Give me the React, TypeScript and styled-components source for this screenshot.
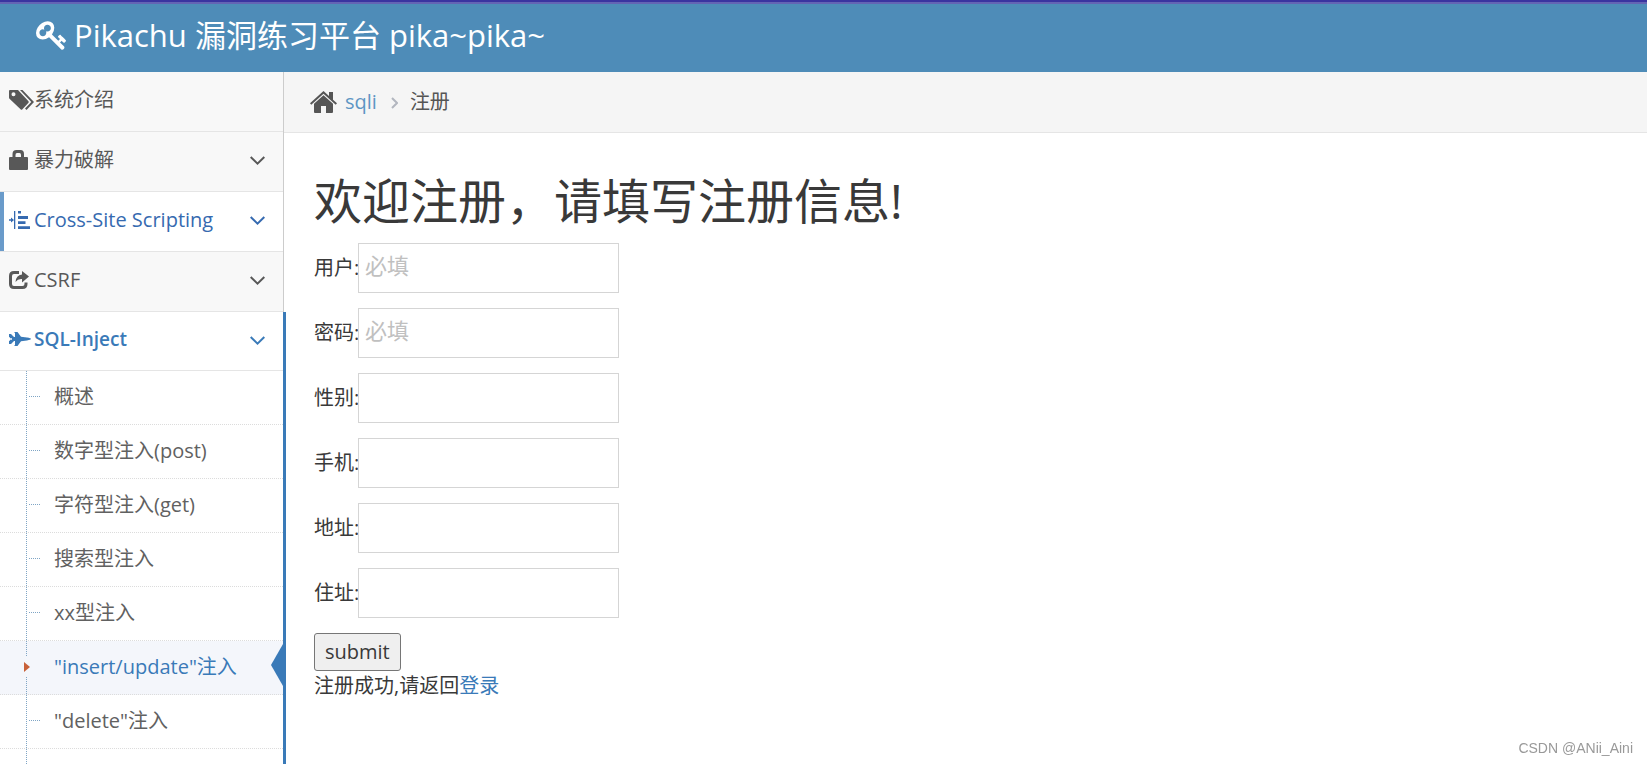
import React from "react";
import styled, { createGlobalStyle, css } from "styled-components";

const GlobalStyle = createGlobalStyle`
  *, *::before, *::after { box-sizing: border-box; }
  body {
    margin: 0;
    background: #fff;
    color: #393939;
    font-family: "Open Sans", "Noto Sans CJK SC", sans-serif;
    font-size: 20px;
    line-height: 30px;
  }
`;

const Page = styled.div`
  display: flex;
  flex-direction: column;
  min-height: 100vh;
`;

const Header = styled.header`
  display: flex;
  align-items: center;
  height: 72px;
  padding: 0 36px 4px;
  background: #4e8cb8;
  border-top: 2px solid #3a34a0;
  box-shadow: inset 0 2px 0 #6464b4;
`;

const Brand = styled.a`
  display: flex;
  align-items: center;
  gap: 6px;
  color: #fff;
  font-size: 31px;
  line-height: 40px;
  text-decoration: none;
`;

const Columns = styled.div`
  display: flex;
  flex: 1;
`;

const Sidebar = styled.nav`
  display: flex;
  flex: none;
  width: 286px;
`;

const Menu = styled.ul`
  display: flex;
  flex-direction: column;
  flex: 1;
  margin: 0;
  padding: 0;
  list-style: none;
`;

const MenuItem = styled.li<{ $open?: boolean }>`
  display: flex;
  flex-direction: column;
  margin-right: 2px;
  border-right: 1px solid #ccc;
  ${(p) =>
    p.$open &&
    css`
      flex: 1;
      margin-right: 0;
      border-right: 3px solid #3a7ab8;
    `}
`;

const MenuLink = styled.a<{ $state?: "hover" | "open" }>`
  display: flex;
  align-items: center;
  height: 60px;
  padding: 0 18px 4px 9px;
  border-bottom: 1px solid #e5e5e5;
  background: #f8f8f8;
  color: #585858;
  text-decoration: none;
  ${(p) =>
    p.$state === "hover" &&
    css`
      background: #fff;
      color: #366ab0;
      box-shadow: inset 4px 0 0 #6a9bca;
    `}
  ${(p) =>
    p.$state === "open" &&
    css`
      height: 58px;
      border-bottom: 0;
      background: #fff;
      color: #3a7ab8;
      font-size: 19px;
      font-weight: 600;
    `}
`;

const MenuIcon = styled.span`
  display: flex;
  flex: none;
  width: 25px;
`;

const MenuText = styled.span`
  flex: 1;
  white-space: nowrap;
`;

const Submenu = styled.ul`
  position: relative;
  flex: 1;
  margin: 0;
  padding: 0;
  border-top: 1px solid #e5e5e5;
  list-style: none;
  &::before {
    content: "";
    position: absolute;
    z-index: 1;
    top: 0;
    bottom: 0;
    left: 26px;
    border-left: 1px dotted #7fa5c5;
  }
`;

const SubItem = styled.li`
  position: relative;
`;

const SubLink = styled.a<{ $current?: boolean }>`
  display: flex;
  align-items: center;
  height: 54px;
  padding: 0 0 2px 54px;
  border-bottom: 1px dotted #dcdcdc;
  background: ${(p) => (p.$current ? "#f4f6fb" : "#fff")};
  color: ${(p) => (p.$current ? "#3a7ab8" : "#616161")};
  text-decoration: none;
  white-space: nowrap;
`;

const Branch = styled.span`
  position: absolute;
  top: 25px;
  left: 29px;
  width: 11px;
  border-top: 1px dotted #7fa5c5;
`;

const Caret = styled.span`
  position: absolute;
  z-index: 2;
  top: 16px;
  left: 24px;
  display: flex;
  align-items: center;
  height: 20px;
  background: #f4f6fb;
`;

const Pointer = styled.svg`
  position: absolute;
  top: 3px;
  right: 0;
`;

const Main = styled.main`
  flex: 1;
  min-width: 0;
`;

const Breadcrumb = styled.nav`
  display: flex;
  align-items: center;
  height: 61px;
  margin-left: -2px;
  padding: 0 26px;
  border-bottom: 1px solid #e5e5e5;
  background: #f5f5f5;
  color: #555;
`;

const Crumb = styled.a`
  margin-left: 8px;
  color: #5e96c4;
  text-decoration: none;
`;

const Separator = styled.svg`
  margin: 2px 12px 0 14px;
`;

const Content = styled.div`
  padding: 36px 28px;
`;

const Title = styled.h1`
  margin: 0 0 10px;
  font-size: 48px;
  font-weight: 400;
  line-height: 64px;
`;

const Form = styled.form`
  display: flex;
  flex-direction: column;
  align-items: flex-start;
`;

const Field = styled.div`
  display: flex;
  align-items: center;
  margin-bottom: 15px;
`;

const FieldLabel = styled.label`
  width: 44px;
  white-space: nowrap;
`;

const TextInput = styled.input`
  width: 261px;
  height: 50px;
  padding: 2px 6px 8px;
  border: 1px solid #d5d5d5;
  border-radius: 0;
  background: #fff;
  color: #858585;
  font-family: inherit;
  font-size: 22px;
  &::placeholder {
    color: #c0c0c0;
    opacity: 1;
  }
`;

const SubmitButton = styled.button`
  height: 38px;
  padding: 0 10px;
  border: 1px solid #767676;
  border-radius: 3px;
  background: #efefef;
  color: #393939;
  font-family: inherit;
  font-size: 20px;
  line-height: 30px;
`;

const Message = styled.p`
  margin: 0;
  a {
    color: #3a7ab8;
    text-decoration: none;
  }
`;

const Watermark = styled.span`
  position: fixed;
  right: 14px;
  bottom: 8px;
  color: #999;
  font-family: "Liberation Sans", sans-serif;
  font-size: 14px;
  line-height: 16px;
`;

const Chevron = styled.svg`
  margin-top: 2px;
`;

const KeyIcon = () => (
  <svg width="32" height="32" viewBox="0 0 1792 1792" fill="currentColor" aria-hidden="true">
    <path d="M832 512q0-80-56-136t-136-56-136 56-56 136q0 42 19 83-41-19-83-19-80 0-136 56t-56 136 56 136 136 56 136-56 56-136q0-42-19-83 41 19 83 19 80 0 136-56t56-136zm851 704q0 17-49 66t-66 49q-9 0-28.500-16t-36.500-33-38.500-40-24.500-26l-96 96 220 220q28 28 28 68 0 42-39 81t-81 39q-40 0-68-28l-671-671q-176 131-365 131-163 0-265.500-102.500t-102.500-265.500q0-160 95-313t248-248 313-95q163 0 265.500 102.500t102.500 265.500q0 189-131 365l355 355 96-96q-3-3-26-24.500t-40-38.500-33-36.500-16-28.500q0-17 49-66t66-49q13 0 23 10 6 6 46 44.500t82 79.500 86.500 86 73 78 28.500 41z" />
  </svg>
);

const TagsIcon = () => (
  <svg width="25" height="20" viewBox="0 0 25 20" fill="currentColor" aria-hidden="true">
    <path fillRule="evenodd" d="M1 0H9L19.500 11.200Q20 12 19.500 12.700L13.200 19.500Q12.500 20 11.800 19.500L.5 8.700Q0 8.200 0 7.500V1Q0 0 1 0ZM4.500 2.300a2 2 0 1 0 0 4 2 2 0 1 0 0-4Z" />
    <path d="M11 0H13.500L25 12L17.500 20L16 18.600L22.300 12Z" />
  </svg>
);

const LockIcon = () => (
  <svg width="19" height="20" viewBox="0 0 19 20" fill="currentColor" aria-hidden="true">
    <path fillRule="evenodd" d="M1 7H3.500V4Q3.500 0 7.500 0H11.500Q15 0 15 4V7H18Q19 7 19 8V19Q19 20 18 20H1Q0 20 0 19V8Q0 7 1 7ZM6.500 7H12V5Q12 3 10.500 3H8Q6.500 3 6.500 5Z" />
  </svg>
);

const IndentIcon = () => (
  <svg width="22" height="18" viewBox="0 0 22 18" fill="currentColor" aria-hidden="true">
    <path d="M5 0H6.300V18H5ZM0 8.300H2V6.500L5 9L2 11.500V9.700H0ZM9 0H12V2.500H9ZM9 5H19V8H9ZM9 10.200H16.500V13H9ZM9 15.200H21V18H9Z" />
  </svg>
);

const ShareIcon = () => (
  <svg width="20" height="18" viewBox="0 0 20 18" aria-hidden="true">
    <path d="M10 1.500H5Q1.500 1.500 1.500 5V13Q1.500 16.500 5 16.500H13.500Q17 16.500 17 13V11.500" fill="none" stroke="currentColor" strokeWidth="3" />
    <path d="M13 0L20 5.500L13 11.500V8Q9 7.500 6.500 11Q7 4 13 3.500Z" fill="currentColor" />
  </svg>
);

const JetIcon = () => (
  <svg width="22" height="14" viewBox="0 0 22 14" fill="currentColor" aria-hidden="true">
    <path d="M0 2H2L5 5H6V1H5.500V0H8.500L12 4.800L18 5.600Q22 6.300 22 7Q22 7.700 18 8.400L12 9.200L8.500 14H5.500V13H6V9H5L2 12H0V8.700H1V7.700H3V6.300H1V5.300H0Z" />
  </svg>
);

const HomeIcon = () => (
  <svg width="27" height="22" viewBox="0 0 27 22" fill="currentColor" aria-hidden="true">
    <path d="M13.500 0L19 5V1H23V8.700L27 12.300L25.700 13.700L13.500 2.700L1.300 13.700L0 12.300Z" />
    <path d="M13.500 4.300L23 12.800V21Q23 22 22 22H16V15H11V22H5Q4 22 4 21V12.800Z" />
  </svg>
);

const ChevronDown = () => (
  <Chevron width="15" height="9" viewBox="0 0 15 9" fill="none" stroke="currentColor" strokeWidth="2" aria-hidden="true">
    <path d="M.7 1L7.500 7.600L14.300 1" />
  </Chevron>
);

type Entry = {
  text: string;
  icon: React.ReactNode;
  state?: "hover" | "open";
  leaf?: boolean;
  children?: string[];
};

const entries: Entry[] = [
  { text: "系统介绍", icon: <TagsIcon />, leaf: true },
  { text: "暴力破解", icon: <LockIcon /> },
  { text: "Cross-Site Scripting", icon: <IndentIcon />, state: "hover" },
  { text: "CSRF", icon: <ShareIcon /> },
  {
    text: "SQL-Inject",
    icon: <JetIcon />,
    state: "open",
    children: [
      "概述",
      "数字型注入(post)",
      "字符型注入(get)",
      "搜索型注入",
      "xx型注入",
      '"insert/update"注入',
      '"delete"注入',
    ],
  },
];

const currentPage = '"insert/update"注入';

const fields = [
  { id: "username", label: "用户:", placeholder: "必填" },
  { id: "password", label: "密码:", placeholder: "必填", type: "password" },
  { id: "sex", label: "性别:" },
  { id: "phone", label: "手机:" },
  { id: "email", label: "地址:" },
  { id: "address", label: "住址:" },
];

export default function App() {
  return (
    <>
      <GlobalStyle />
      <Page>
        <Header>
          <Brand href="#">
            <KeyIcon />
            Pikachu 漏洞练习平台 pika~pika~
          </Brand>
        </Header>
        <Columns>
          <Sidebar>
            <Menu>
              {entries.map((e) => (
                <MenuItem key={e.text} $open={e.state === "open"}>
                  <MenuLink href="#" $state={e.state}>
                    <MenuIcon>{e.icon}</MenuIcon>
                    <MenuText>{e.text}</MenuText>
                    {!e.leaf && <ChevronDown />}
                  </MenuLink>
                  {e.children && (
                    <Submenu>
                      {e.children.map((c) => {
                        const current = c === currentPage;
                        return (
                          <SubItem key={c}>
                            <SubLink href="#" $current={current}>
                              {c}
                            </SubLink>
                            {current ? (
                              <>
                                <Caret>
                                  <svg width="6" height="10" viewBox="0 0 6 10" aria-hidden="true">
                                    <path d="M0 0L6 5L0 10Z" fill="#c86139" />
                                  </svg>
                                </Caret>
                                <Pointer width="12" height="42" viewBox="0 0 12 42" aria-hidden="true">
                                  <path d="M12 0V42L0 21Z" fill="#3a7ab8" />
                                </Pointer>
                              </>
                            ) : (
                              <Branch />
                            )}
                          </SubItem>
                        );
                      })}
                    </Submenu>
                  )}
                </MenuItem>
              ))}
            </Menu>
          </Sidebar>
          <Main>
            <Breadcrumb>
              <HomeIcon />
              <Crumb href="#">sqli</Crumb>
              <Separator width="7" height="12" viewBox="0 0 7 12" fill="none" stroke="#b2b6bf" strokeWidth="2" aria-hidden="true">
                <path d="M1 1L6 6L1 11" />
              </Separator>
              <span>注册</span>
            </Breadcrumb>
            <Content>
              <Title>欢迎注册，请填写注册信息!</Title>
              <Form onSubmit={(e) => e.preventDefault()}>
                {fields.map((f) => (
                  <Field key={f.id}>
                    <FieldLabel htmlFor={f.id}>{f.label}</FieldLabel>
                    <TextInput id={f.id} name={f.id} type={f.type ?? "text"} placeholder={f.placeholder} />
                  </Field>
                ))}
                <SubmitButton type="submit">submit</SubmitButton>
              </Form>
              <Message>
                注册成功,请返回<a href="#">登录</a>
              </Message>
            </Content>
          </Main>
        </Columns>
        <Watermark>CSDN @ANii_Aini</Watermark>
      </Page>
    </>
  );
}
